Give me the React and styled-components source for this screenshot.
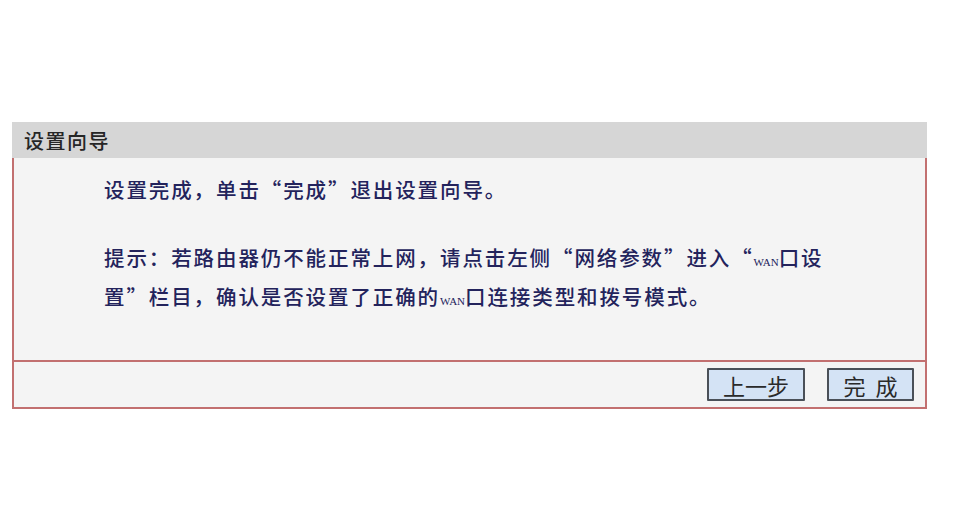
import React from "react";
import styled, { createGlobalStyle } from "styled-components";

const Global = createGlobalStyle`
  html, body { margin: 0; padding: 0; background: #ffffff; }
  body { font-family: "Noto Sans CJK SC", "Noto Sans", sans-serif; }
`;

const Page = styled.div`
  width: 961px;
  height: 516px;
  padding: 122px 0 0 12px;
  box-sizing: border-box;
  overflow: hidden;
`;

const Panel = styled.div`
  width: 915px;
  display: flex;
  flex-direction: column;
`;

const Header = styled.div`
  height: 36px;
  background: #d6d6d6;
  display: flex;
  align-items: center;
  padding-left: 12px;
  font-size: 20px;
  letter-spacing: 1.5px;
  color: #262626;
  font-weight: 500;
`;

const Box = styled.div`
  border: 2px solid #c27070;
  border-top: none;
  background: #f4f4f4;
  display: flex;
  flex-direction: column;
`;

const Content = styled.div`
  height: 202px;
  box-sizing: border-box;
  padding: 14px 0 0 90px;
  color: #23235c;
  font-size: 20.5px;
  letter-spacing: 1.9px;
  line-height: 34px;
  font-weight: 500;
`;

const Para = styled.p`
  margin: 0 0 ${(p) => (p.$gap ? "34px" : "0")} 0;
  width: 728px;
`;

const Latin = styled.span`
  font-family: "Liberation Serif", serif;
  font-size: 11px;
  letter-spacing: 0;
`;

const Footer = styled.div`
  height: 47px;
  border-top: 2px solid #c27070;
  box-sizing: border-box;
  display: flex;
  align-items: center;
  justify-content: flex-end;
  gap: 22px;
  padding-right: 11px;
`;

const Button = styled.button`
  width: ${(p) => p.$w}px;
  height: 33px;
  background: #d4e3f5;
  border: 2px solid #4a5058;
  border-radius: 1px;
  font-family: "Noto Sans CJK SC", sans-serif;
  font-size: 22px;
  color: #2a2a2a;
  letter-spacing: ${(p) => p.$ls || 0}px;
  text-indent: ${(p) => p.$ls || 0}px;
  padding: 0;
  display: flex;
  align-items: center;
  justify-content: center;
`;

export default function App() {
  return (
    <>
      <Global />
      <Page>
        <Panel>
          <Header>设置向导</Header>
          <Box>
            <Content>
              <Para $gap>设置完成，单击“完成”退出设置向导。</Para>
              <Para>
                提示：若路由器仍不能正常上网，请点击左侧“网络参数”进入“<Latin>WAN</Latin>口设置”栏目，确认是否设置了正确的<Latin>WAN</Latin>口连接类型和拨号模式。
              </Para>
            </Content>
            <Footer>
              <Button $w={98}>上一步</Button>
              <Button $w={87} $ls={10}>完成</Button>
            </Footer>
          </Box>
        </Panel>
      </Page>
    </>
  );
}
